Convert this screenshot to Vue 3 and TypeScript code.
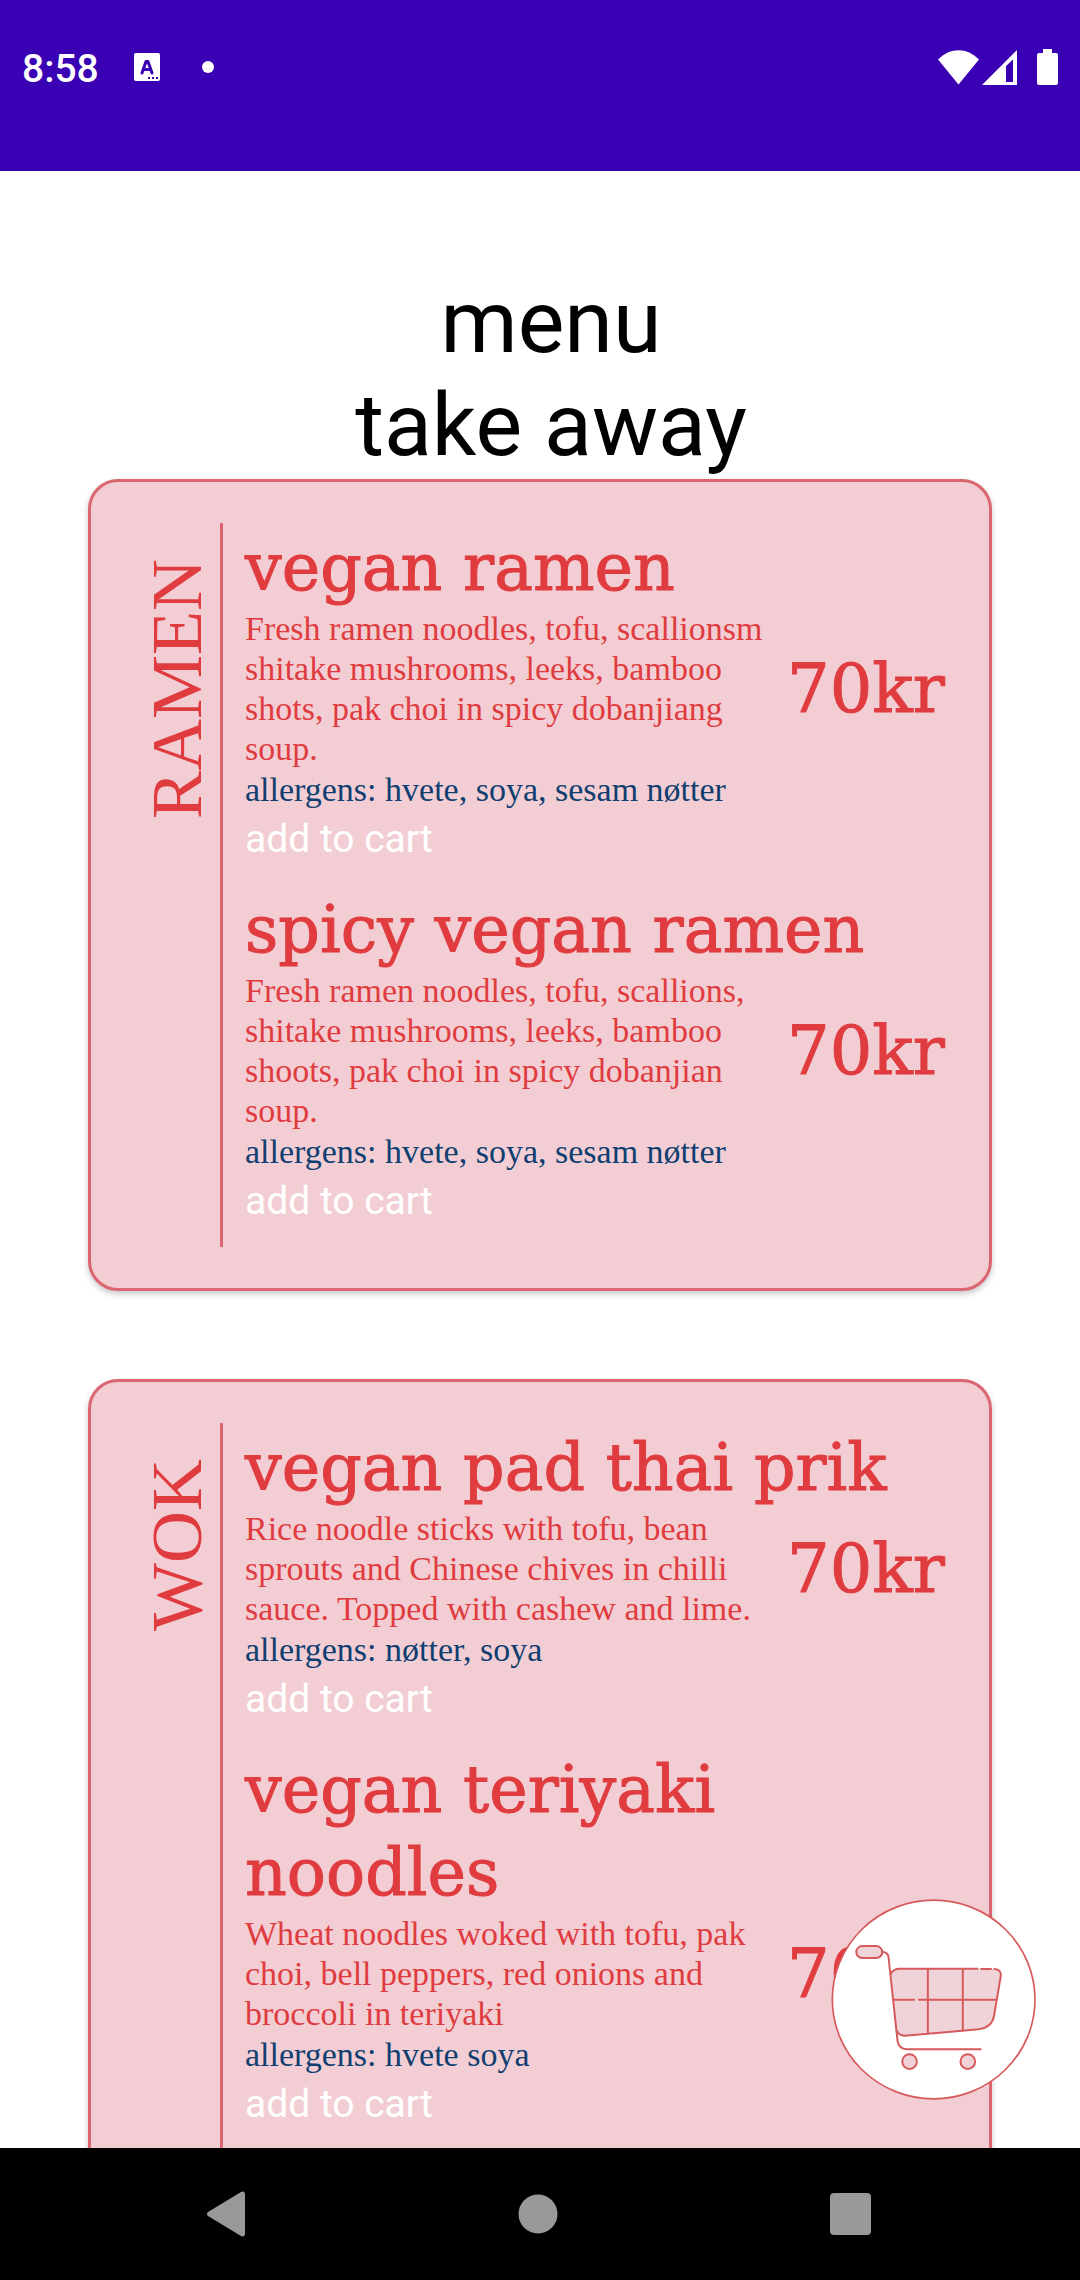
<script setup lang="ts">
interface Dish {
  name: string
  description: string
  allergens: string
  price: string
}

interface Category {
  label: string
  dishes: Dish[]
}

const categories: Category[] = [
  {
    label: 'RAMEN',
    dishes: [
      {
        name: 'vegan ramen',
        description:
          'Fresh ramen noodles, tofu, scallionsm shitake mushrooms, leeks, bamboo shots, pak choi in spicy dobanjiang soup.',
        allergens: 'hvete, soya, sesam nøtter',
        price: '70kr',
      },
      {
        name: 'spicy vegan ramen',
        description:
          'Fresh ramen noodles, tofu, scallions, shitake mushrooms, leeks, bamboo shoots, pak choi in spicy dobanjian soup.',
        allergens: 'hvete, soya, sesam nøtter',
        price: '70kr',
      },
    ],
  },
  {
    label: 'WOK',
    dishes: [
      {
        name: 'vegan pad thai prik',
        description:
          'Rice noodle sticks with tofu, bean sprouts and Chinese chives in chilli sauce. Topped with cashew and lime.',
        allergens: 'nøtter, soya',
        price: '70kr',
      },
      {
        name: 'vegan teriyaki noodles',
        description:
          'Wheat noodles woked with tofu, pak choi, bell peppers, red onions and broccoli in teriyaki',
        allergens: 'hvete soya',
        price: '70kr',
      },
    ],
  },
]
</script>

<template>
  <div class="screen">
    <header class="status">
      <div class="status-row">
        <time class="clock">8:58</time>
        <svg class="notice" width="26" height="28" viewBox="0 0 26 28" aria-hidden="true">
          <rect width="26" height="28" rx="2" fill="#fff" />
          <path d="M8 20 12 8.500h2L18 20M9.500 16.500h7" fill="none" stroke="#3a00b3" stroke-width="3" stroke-linecap="round" stroke-linejoin="round" />
          <path d="M14 24h2v2h-2zM18 24h2v2h-2zM22 24h2v2h-2z" fill="#3a00b3" />
        </svg>
        <span class="dot"></span>
        <span class="spacer"></span>
        <svg width="41" height="35" viewBox="0 0 41 35" aria-hidden="true">
          <path d="M20.500 34.500 0 9.500C12-3 29-3 41 9.500z" fill="#fff" />
        </svg>
        <svg class="signal" width="35" height="35" viewBox="0 0 35 35" aria-hidden="true">
          <path d="M0 35 35 0v35zM24 16v16h7V9.500z" fill="#fff" fill-rule="evenodd" />
        </svg>
        <svg class="battery" width="21" height="36" viewBox="0 0 21 36" aria-hidden="true">
          <path d="M6 0h9v4h4q2 0 2 2v28q0 2-2 2H2q-2 0-2-2V6q0-2 2-2h4z" fill="#fff" />
        </svg>
      </div>
    </header>

    <main class="content">
      <h1 class="heading">menu<br />take away</h1>
      <div class="cards">
        <section v-for="category in categories" :key="category.label" class="card">
          <div class="side">
            <h2 class="label">{{ category.label }}</h2>
          </div>
          <div class="dishes">
            <article v-for="dish in category.dishes" :key="dish.name">
              <h3 class="name">{{ dish.name }}</h3>
              <div class="details">
                <p class="description">{{ dish.description }}</p>
                <span class="price">{{ dish.price }}</span>
              </div>
              <p class="allergens">allergens: {{ dish.allergens }}</p>
              <button class="add" type="button">add to cart</button>
            </article>
          </div>
        </section>
      </div>
    </main>

    <button class="cart" type="button" aria-label="Open cart">
      <svg width="205" height="201" viewBox="152 88 616 603" fill="none" stroke="#d65a5c" stroke-width="6" stroke-linecap="round" stroke-linejoin="round" aria-hidden="true">
        <ellipse cx="460.500" cy="389.500" rx="304.500" ry="298.500" fill="#fff" stroke-width="5" />
        <path d="M332 312Q340 297 358 297H643Q665 298 662 320L642 438Q636 474 596 479L382 498Q356 500 350 484Z" fill="#f0d3d8" stroke="none" />
        <path d="M332 312Q340 297 358 297H592M603 298H633M643 298Q665 299 662 320L642 438Q636 474 596 479L382 498Q356 500 350 484" />
        <path d="M306 247Q324 247 325 264L352 514Q356 539 380 539H602" />
        <path d="M443 298V491M548 298V482M342 390H402M416 390H646" />
        <rect x="228" y="229" width="78" height="36" rx="18" fill="#f0d3d8" />
        <circle cx="388" cy="576" r="22" fill="#f0d3d8" />
        <circle cx="563" cy="576" r="22" fill="#f0d3d8" />
      </svg>
    </button>

    <nav class="system">
      <button type="button" aria-label="Back">
        <svg width="40" height="46" viewBox="0 0 40 46"><path d="M35 1Q39-1 39 4V42Q39 47 35 45L2 25Q0 23 2 21Z" fill="#999" /></svg>
      </button>
      <button type="button" aria-label="Home">
        <svg width="40" height="40" viewBox="0 0 40 40"><circle cx="20" cy="20" r="19.500" fill="#999" /></svg>
      </button>
      <button type="button" aria-label="Recent apps">
        <svg width="42" height="42" viewBox="0 0 42 42"><rect width="41" height="42" rx="4" fill="#999" /></svg>
      </button>
    </nav>
  </div>
</template>

<style>
body {
  margin: 0;
  background: #fff;
}
</style>

<style scoped>
.screen {
  position: relative;
  display: flex;
  flex-direction: column;
  height: 100vh;
  font-family: Roboto, sans-serif;
}

h1,
h2,
h3,
p {
  margin: 0;
  font-weight: 400;
}

button {
  margin: 0;
  padding: 0;
  border: 0;
  background: none;
  font: inherit;
  cursor: pointer;
}

svg {
  display: block;
}

.status {
  flex: none;
  height: 171px;
  background: #3a00b3;
}

.status-row {
  display: flex;
  align-items: center;
  height: 134px;
  padding: 0 22px;
  color: #fff;
}

.clock {
  width: 112px;
  padding-top: 4px;
  font-size: 39px;
  font-weight: 500;
  line-height: 46px;
}

.dot {
  width: 12px;
  height: 12px;
  margin-left: 42px;
  border-radius: 50%;
  background: #fff;
}

.spacer {
  flex: 1;
}

.signal {
  margin-left: 3px;
}

.battery {
  margin-left: 20px;
}

.content {
  flex: 1;
  min-height: 0;
  overflow-y: auto;
  scrollbar-width: none;
}

.heading {
  padding: 99px 0 3px 22px;
  font-size: 88px;
  line-height: 103px;
  text-align: center;
  color: #000;
}

.cards {
  display: flex;
  flex-direction: column;
  gap: 88px;
  padding: 0 88px 88px;
}

.card {
  display: flex;
  padding: 41px 41px 41px 0;
  border: 3px solid #db6671;
  border-radius: 30px;
  background: #f2ced4;
  box-shadow: 0 3px 6px rgba(0, 0, 0, 0.22);
}

.side {
  flex: none;
  display: flex;
  justify-content: flex-end;
  align-items: flex-start;
  width: 129px;
  padding: 36px 3px 0 0;
  box-sizing: border-box;
}

.label {
  writing-mode: vertical-rl;
  transform: rotate(180deg);
  font-family: 'Liberation Serif', serif;
  font-size: 72px;
  line-height: 80px;
  color: #e03c3f;
}

.dishes {
  flex: 1;
  min-width: 0;
  display: flex;
  flex-direction: column;
  gap: 26px;
  padding: 3px 0 23px 22px;
  border-left: 3px solid #db6671;
}

.name,
.price {
  font-family: 'DejaVu Serif', serif;
  line-height: 83px;
  color: #e03c3f;
  -webkit-text-stroke: 1px #e03c3f;
}

.name {
  font-size: 65px;
}

.details {
  display: flex;
  align-items: center;
  gap: 16px;
}

.description,
.allergens {
  font-family: 'Liberation Serif', serif;
  font-size: 34px;
}

.description {
  flex: 1;
  line-height: 40px;
  color: #e03c3f;
}

.price {
  flex: none;
  width: 161px;
  font-size: 67px;
}

.allergens {
  line-height: 41px;
  color: #103e70;
}

.add {
  display: block;
  margin-top: 7px;
  font-size: 39px;
  line-height: 45px;
  color: #fff;
}

.cart {
  position: absolute;
  right: 44px;
  bottom: 180px;
}

.system {
  flex: none;
  display: flex;
  justify-content: space-between;
  align-items: center;
  height: 132px;
  padding: 0 208px 0 206px;
  background: #000;
}
</style>
